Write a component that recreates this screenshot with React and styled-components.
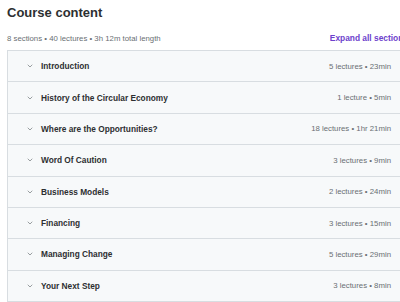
import React from 'react'
import styled, { createGlobalStyle } from 'styled-components'
import { ChevronDown } from 'lucide-react'

const sections = [
  { id: 1, title: 'Introduction', meta: '5 lectures • 23min' },
  { id: 2, title: 'History of the Circular Economy', meta: '1 lecture • 5min' },
  { id: 3, title: 'Where are the Opportunities?', meta: '18 lectures • 1hr 21min' },
  { id: 4, title: 'Word Of Caution', meta: '3 lectures • 9min' },
  { id: 5, title: 'Business Models', meta: '2 lectures • 24min' },
  { id: 6, title: 'Financing', meta: '3 lectures • 15min' },
  { id: 7, title: 'Managing Change', meta: '5 lectures • 29min' },
  { id: 8, title: 'Your Next Step', meta: '3 lectures • 8min' },
]

const GlobalStyle = createGlobalStyle`
    body{
        margin: 0;
        background: #fff;
        font-family: "Liberation Sans", Arial, sans-serif;
        color: #2d2f31;
        overflow: hidden;
    }
`

const App = () => {
  return (
    <CourseStyled>
      <GlobalStyle />
      <h2 className="heading">Course content</h2>
      <div className="summary">
        <span>8 sections • 40 lectures • 3h 12m total length</span>
        <ExpandButton>Expand all sections</ExpandButton>
      </div>
      <SectionList>
        {sections.map((s) => (
          <SectionRow key={s.id}>
            <ChevronDown size={8} strokeWidth={2} className="chev" />
            <SectionTitle>{s.title}</SectionTitle>
            <SectionMeta>{s.meta}</SectionMeta>
          </SectionRow>
        ))}
      </SectionList>
    </CourseStyled>
  )
}

export default App

const CourseStyled = styled.section`
    width: 400px;
    height: 302px;
    padding-left: 7px;
    box-sizing: border-box;
    overflow: hidden;
    .heading{
        margin: 0;
        padding-top: 4px;
        font-size: 13px;
        line-height: 17px;
        font-weight: 700;
    }
    .summary{
        display: flex;
        align-items: center;
        justify-content: space-between;
        height: 16px;
        margin-top: 9px;
        margin-bottom: 4px;
        font-size: 7.8px;
        color: #6a6f73;
        white-space: nowrap;
    }
`

const ExpandButton = styled.button`
    border: none;
    background: none;
    padding: 0;
    margin-right: -8px;
    font-family: inherit;
    font-size: 8.4px;
    font-weight: 700;
    color: #6d3fcc;
    white-space: nowrap;
`

const SectionList = styled.div`
    width: 400px;
    border: 1px solid #d8dde1;
    border-right: none;
`

const SectionRow = styled.div`
    display: flex;
    align-items: center;
    height: 30.375px;
    padding: 0 17px 0 18px;
    background: #f7f9fa;
    border-bottom: 1px solid #d8dde1;
    &:last-child{
        border-bottom: none;
    }
    .chev{
        color: #6a6f73;
        flex-shrink: 0;
        margin-right: 7px;
    }
`

const SectionTitle = styled.span`
    flex: 1;
    font-size: 8.3px;
    font-weight: 700;
    color: #2d2f31;
`

const SectionMeta = styled.span`
    font-size: 7.8px;
    color: #6a6f73;
    white-space: nowrap;
`
